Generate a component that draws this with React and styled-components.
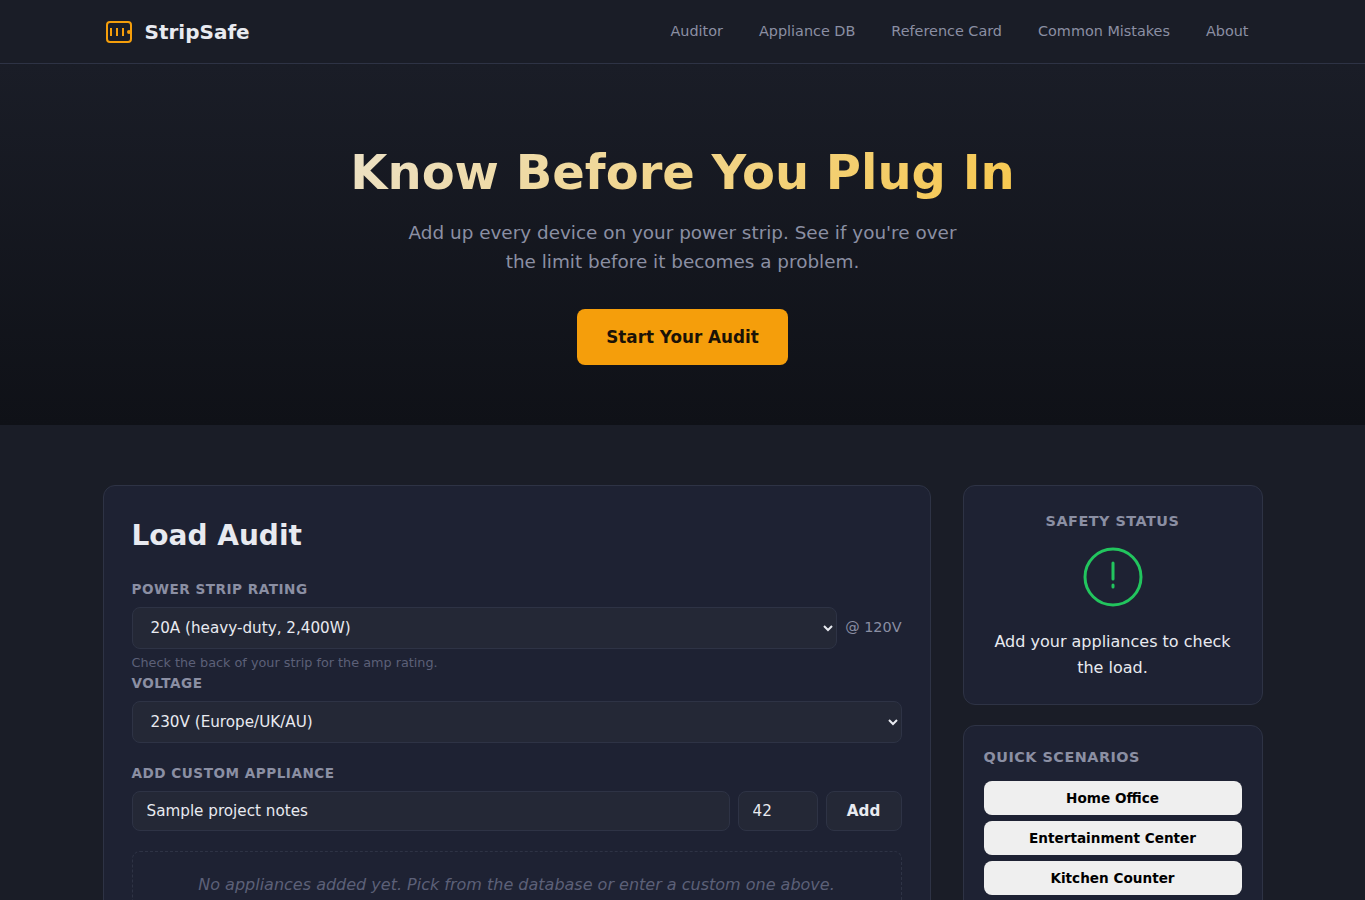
import styled, { createGlobalStyle } from "styled-components";

const GlobalStyle = createGlobalStyle`
  *, *::before, *::after {
    box-sizing: border-box;
    margin: 0;
    padding: 0;
  }
  body {
    height: 900px;
    overflow: hidden;
    background: #0f1117;
    color: #e8eaf0;
    font-family: "DejaVu Sans", sans-serif;
    font-size: 16px;
    line-height: 1.6;
  }
`;

const links = ["Auditor", "Appliance DB", "Reference Card", "Common Mistakes", "About"];
const scenarios = ["Home Office", "Entertainment Center", "Kitchen Counter"];

const Logo = () => (
  <svg width="32" height="32" viewBox="0 0 32 32" fill="none" stroke="#f59e0b">
    <rect x="4" y="6" width="24" height="20" rx="3" strokeWidth="2" />
    <path d="M8 12v8M14 12v8M20 12v8" strokeWidth="2" />
    <circle cx="26" cy="16" r="2" fill="#f59e0b" stroke="none" />
  </svg>
);

const StatusIcon = () => (
  <svg width="64" height="64" viewBox="0 0 64 64" fill="none" stroke="#22c55e" strokeWidth="3">
    <circle cx="32" cy="32" r="28" />
    <path d="M32 18v16M32 40v2" strokeLinecap="round" />
  </svg>
);

const App = () => {
  return (
    <Page>
      <GlobalStyle />
      <Header>
        <Brand>
          <Logo />
          StripSafe
        </Brand>
        <Nav>
          {links.map((label) => (
            <NavLink key={label} href="#">
              {label}
            </NavLink>
          ))}
        </Nav>
      </Header>
      <Hero>
        <HeroTitle>Know Before You Plug In</HeroTitle>
        <HeroText>
          Add up every device on your power strip. See if you're over the limit
          before it becomes a problem.
        </HeroText>
        <StartButton href="#">Start Your Audit</StartButton>
      </Hero>
      <Main>
        <AuditCard>
          <CardTitle>Load Audit</CardTitle>
          <Label>Power strip rating</Label>
          <RatingRow>
            <Select defaultValue="20">
              <option value="20">20A (heavy-duty, 2,400W)</option>
            </Select>
            <Suffix>@ 120V</Suffix>
          </RatingRow>
          <Hint>Check the back of your strip for the amp rating.</Hint>
          <Label>Voltage</Label>
          <Select defaultValue="230">
            <option value="230">230V (Europe/UK/AU)</option>
          </Select>
          <CustomBlock>
            <Label>Add custom appliance</Label>
            <CustomRow>
              <Input defaultValue="Sample project notes" />
              <Input $width="80px" defaultValue="42" />
              <AddButton>Add</AddButton>
            </CustomRow>
          </CustomBlock>
          <EmptyState>
            No appliances added yet. Pick from the database or enter a custom
            one above.
          </EmptyState>
        </AuditCard>
        <Sidebar>
          <StatusCard>
            <SideTitle>Safety status</SideTitle>
            <StatusIcon />
            <StatusText>Add your appliances to check the load.</StatusText>
          </StatusCard>
          <ScenarioCard>
            <SideTitle>Quick scenarios</SideTitle>
            <ScenarioList>
              {scenarios.map((name) => (
                <ScenarioButton key={name}>{name}</ScenarioButton>
              ))}
            </ScenarioList>
          </ScenarioCard>
        </Sidebar>
      </Main>
    </Page>
  );
};

const Page = styled.div`
  height: 900px;
  overflow: hidden;
`;
const Header = styled.header`
  display: flex;
  align-items: center;
  justify-content: space-between;
  height: 64px;
  padding: 0 102.5px;
  background: #1a1d27;
  border-bottom: 1px solid #2e3345;
`;
const Brand = styled.div`
  display: flex;
  align-items: center;
  gap: 10px;
  font-size: 20px;
  font-weight: 700;
`;
const Nav = styled.nav`
  display: flex;
  gap: 8px;
`;
const NavLink = styled.a`
  padding: 6px 14px;
  color: #8b8fa3;
  font-size: 14.4px;
  text-decoration: none;
`;
const Hero = styled.section`
  display: flex;
  flex-direction: column;
  align-items: center;
  height: 361px;
  padding-top: 80px;
  background: linear-gradient(180deg, #1a1d27 0%, #0f1117 100%);
  text-align: center;
`;
const HeroTitle = styled.h1`
  width: 1160px;
  margin-bottom: 16px;
  background: linear-gradient(135deg, #e8eaf0 0%, #fbbf24 100%);
  background-clip: text;
  color: transparent;
  font-size: 48px;
  font-weight: 700;
  line-height: 1.2;
`;
const HeroText = styled.p`
  width: 560px;
  margin-bottom: 33px;
  color: #8b8fa3;
  font-size: 18.4px;
`;
const StartButton = styled.a`
  padding: 15px 29px 14px;
  border-radius: 8px;
  background: #f59e0b;
  color: #1a1207;
  font-size: 16.8px;
  font-weight: 700;
  text-decoration: none;
`;
const Main = styled.main`
  display: grid;
  grid-template-columns: 1fr 300px;
  gap: 32px;
  align-items: start;
  min-height: 600px;
  padding: 60px 102.5px;
  background: #1a1d27;
`;
const Card = styled.div`
  border: 1px solid #2e3345;
  border-radius: 12px;
  background: #1e2233;
`;
const AuditCard = styled(Card)`
  height: 600px;
  padding: 28px;
`;
const CardTitle = styled.h2`
  margin-bottom: 20px;
  font-size: 28px;
  line-height: 1.6;
`;
const Label = styled.label`
  display: block;
  margin-bottom: 6px;
  color: #8b8fa3;
  font-size: 13.6px;
  font-weight: 600;
  letter-spacing: 0.5px;
  text-transform: uppercase;
`;
const RatingRow = styled.div`
  display: flex;
  align-items: center;
  gap: 8px;
`;
const Select = styled.select`
  display: block;
  width: 100%;
  height: 42px;
  padding: 10px 14px;
  border: 1px solid #2e3345;
  border-radius: 8px;
  background: #242836;
  color: #e8eaf0;
  font-family: inherit;
  font-size: 15.2px;
`;
const Suffix = styled.span`
  color: #8b8fa3;
  font-size: 14.4px;
  white-space: nowrap;
`;
const Hint = styled.p`
  margin-top: 4px;
  color: #5c6078;
  font-size: 12.8px;
`;
const CustomBlock = styled.div`
  margin-top: 20px;
`;
const CustomRow = styled.div`
  display: flex;
  gap: 8px;
`;
const Input = styled.input`
  flex: ${({ $width }) => ($width ? `0 0 ${$width}` : "1")};
  width: ${({ $width }) => $width || "auto"};
  min-width: 0;
  height: 40px;
  padding: 10px 14px;
  border: 1px solid #2e3345;
  border-radius: 8px;
  background: #242836;
  color: #e8eaf0;
  font-family: inherit;
  font-size: 15.2px;
`;
const AddButton = styled.button`
  width: 76px;
  height: 40px;
  border: 1px solid #2e3345;
  border-radius: 8px;
  background: #242836;
  color: #e8eaf0;
  font-family: inherit;
  font-size: 15.2px;
  font-weight: 600;
`;
const EmptyState = styled.div`
  margin-top: 20px;
  padding: 20px;
  border: 1px dashed #2e3345;
  border-radius: 8px;
  color: #5c6078;
  font-style: italic;
  text-align: center;
`;
const Sidebar = styled.aside`
  display: flex;
  flex-direction: column;
  gap: 20px;
`;
const SideTitle = styled.h3`
  color: #8b8fa3;
  font-size: 14.4px;
  letter-spacing: 0.5px;
  text-transform: uppercase;
`;
const StatusCard = styled(Card)`
  display: flex;
  flex-direction: column;
  align-items: center;
  height: 220px;
  padding: 24px 20px;
  text-align: center;
  svg {
    flex-shrink: 0;
    margin: 12px 0 20px;
  }
`;
const StatusText = styled.p`
  font-size: 16px;
`;
const ScenarioCard = styled(Card)`
  padding: 20px;
`;
const ScenarioList = styled.div`
  display: flex;
  flex-direction: column;
  gap: 6px;
  min-height: 160px;
  margin-top: 12px;
`;
const ScenarioButton = styled.button`
  height: 34px;
  border: none;
  border-radius: 8px;
  background: #efefef;
  color: #000;
  font-family: inherit;
  font-size: 13.6px;
  font-weight: 600;
`;

export default App;
